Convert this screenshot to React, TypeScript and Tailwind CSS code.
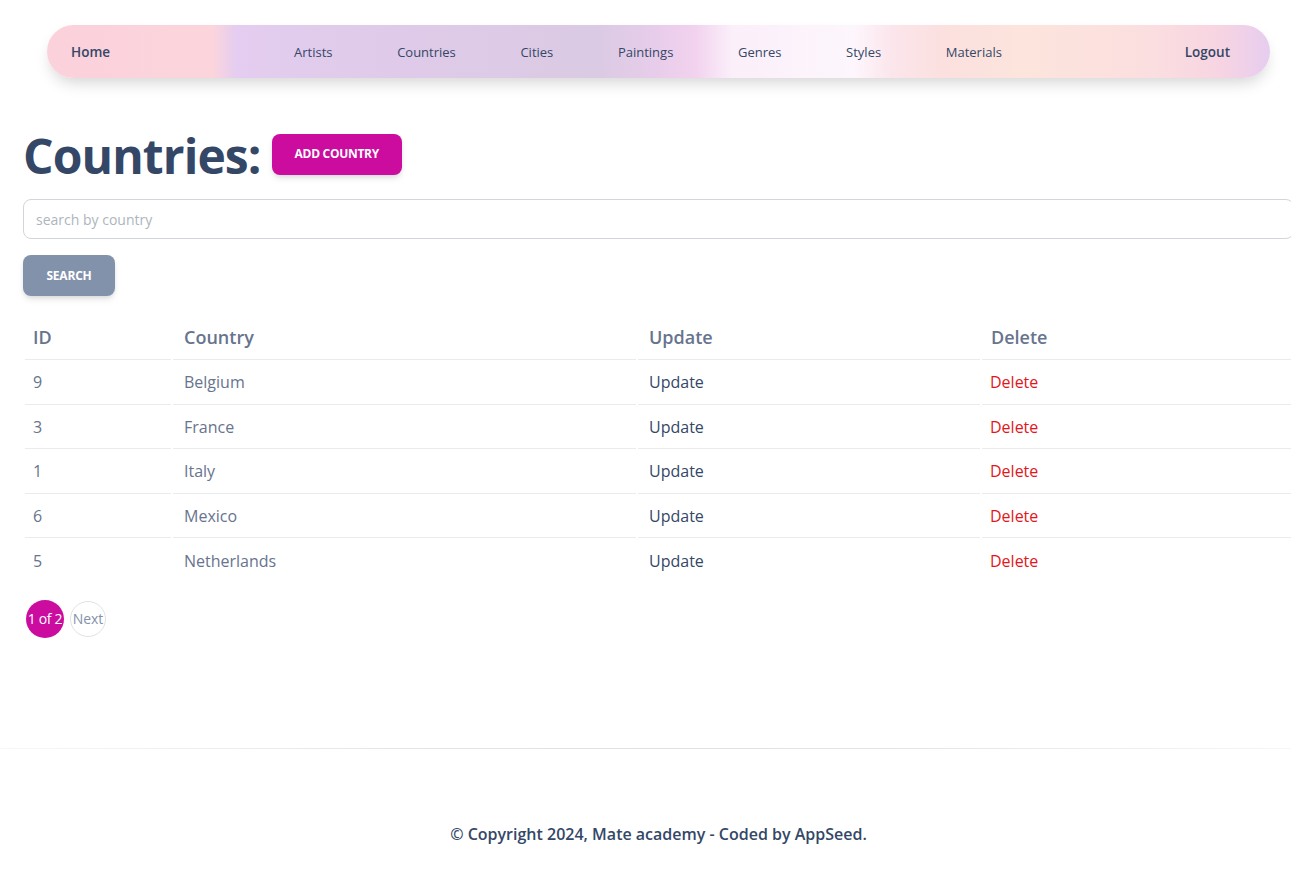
import React from "react";

const rows = [
  { id: 9, name: "Belgium" },
  { id: 3, name: "France" },
  { id: 1, name: "Italy" },
  { id: 6, name: "Mexico" },
  { id: 5, name: "Netherlands" },
];

const navItems = ["Artists", "Countries", "Cities", "Paintings", "Genres", "Styles", "Materials"];

export default function App() {
  return (
    <div className="w-full h-[878px] overflow-hidden bg-white" style={{ fontFamily: '"Open Sans", "Noto Sans", sans-serif' }}>
      <div className="w-[1317px] flex flex-col">
        {/* Navbar */}
        <div className="pt-[25px] px-[47px]">
          <nav className="h-[53px] rounded-full flex items-center pt-[2px] pl-[24px] pr-[40px] shadow-[0_8px_16px_-4px_rgba(0,0,0,0.18)] bg-[linear-gradient(90deg,#fbd1dc_0%,#fcd5dc_13.5%,#e4cdf0_15.5%,#e0cbea_25%,#dbcae4_45%,#e8cdeb_50%,#f2d2ee_53%,#fbeffa_56%,#fdf6fc_66%,#fbe6ec_69%,#fbe0df_73%,#fde4dc_80%,#fbdfe0_90%,#f7d4e2_96%,#e6cdef_100%)]">
            <span className="text-[13.5px] font-semibold text-[#344767]">Home</span>
            <div className="flex ml-[184px] gap-[64.6px]">
              {navItems.map((n) => (
                <span key={n} className="text-[13px] text-[#344767]">{n}</span>
              ))}
            </div>
            <span className="ml-auto text-[13.5px] font-semibold text-[#344767]">Logout</span>
          </nav>
        </div>

        {/* Content */}
        <div className="px-[23px] mt-[48px]">
          <div className="flex items-center gap-[11px]">
            <h1 className="text-[48px] leading-[60px] font-bold text-[#344767] tracking-[-0.9px]">Countries:</h1>
            <button className="h-[41px] px-[23px] -mt-[4px] rounded-lg bg-[#cb0c9f] text-white text-[12px] font-bold tracking-[-0.3px] shadow-[0_4px_7px_-1px_rgba(0,0,0,0.11),0_2px_4px_-1px_rgba(0,0,0,0.07)]">
              ADD COUNTRY
            </button>
          </div>

          <input
            placeholder="search by country"
            className="mt-[13px] block w-full h-[40px] rounded-lg border border-[#d2d6da] px-3 text-[14px] text-[#495057] placeholder:text-[#adb5bd] outline-none"
          />

          <button className="mt-[16px] h-[41px] w-[92px] rounded-lg bg-[#8392ab] text-white text-[12px] font-bold tracking-[-0.2px] shadow-[0_4px_7px_-1px_rgba(0,0,0,0.11),0_2px_4px_-1px_rgba(0,0,0,0.07)]">
            SEARCH
          </button>

          <table className="mt-[20px] border-separate border-spacing-[2px] w-[1271px] table-fixed">
            <colgroup>
              <col className="w-[146px]" />
              <col className="w-[463px]" />
              <col className="w-[342px]" />
              <col />
            </colgroup>
            <thead>
              <tr>
                <th className="h-[42px] pb-[3px] pl-[8px] text-left text-[18px] font-semibold text-[#67748e] border-b border-[#e9ecef]">ID</th>
                <th className="h-[42px] pb-[3px] pl-[11px] text-left text-[18px] font-semibold text-[#67748e] border-b border-[#e9ecef]">Country</th>
                <th className="h-[42px] pb-[3px] pl-[11px] text-left text-[18px] font-semibold text-[#67748e] border-b border-[#e9ecef]">Update</th>
                <th className="h-[42px] pb-[3px] pl-[9px] text-left text-[18px] font-semibold text-[#67748e] border-b border-[#e9ecef]">Delete</th>
              </tr>
            </thead>
            <tbody>
              {rows.map((r, i) => {
                const b = i < rows.length - 1 ? "border-b border-[#e9ecef]" : "";
                return (
                  <tr key={r.id}>
                    <td className={`h-[42.5px] pb-[1px] pl-[8px] text-[16px] text-[#67748e] ${b}`}>{r.id}</td>
                    <td className={`h-[42.5px] pb-[1px] pl-[11px] text-[16px] text-[#67748e] ${b}`}>{r.name}</td>
                    <td className={`h-[42.5px] pb-[1px] pl-[11px] text-[16px] text-[#344767] ${b}`}>Update</td>
                    <td className={`h-[42.5px] pb-[1px] pl-[8px] text-[16px] text-[#e3161b] ${b}`}>Delete</td>
                  </tr>
                );
              })}
            </tbody>
          </table>

          <div className="mt-[15px] ml-[3px] flex items-center gap-[6px]">
            <div className="w-[38px] h-[38px] rounded-full bg-[#cb0c9f] text-white text-[14px] flex items-center justify-center whitespace-nowrap tracking-[-0.3px]">
              1 of 2
            </div>
            <div className="w-[36px] h-[36px] rounded-full border border-[#dee2e6] text-[#8392ab] text-[14px] flex items-center justify-center">
              Next
            </div>
          </div>
        </div>

        {/* Footer */}
        <div className="mt-[110px] h-px w-full bg-[linear-gradient(90deg,rgba(0,0,0,0.03),rgba(0,0,0,0.1)_30%,rgba(0,0,0,0.12)_50%,rgba(0,0,0,0.1)_70%,rgba(0,0,0,0.03))]" />
        <div className="mt-[73px] text-center text-[16px] font-semibold text-[#344767]">
          © Copyright 2024, Mate academy - Coded by AppSeed.
        </div>
      </div>
    </div>
  );
}
